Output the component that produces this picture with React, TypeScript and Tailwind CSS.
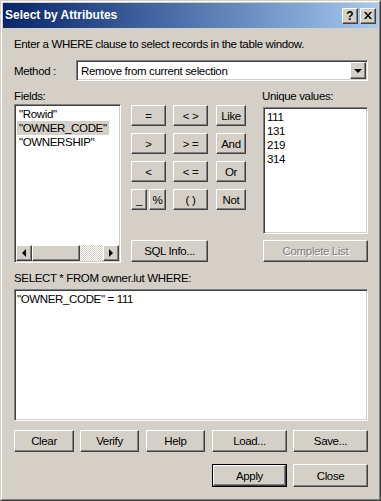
import React from 'react';

const FONT = "font-['Liberation_Sans',Arial,sans-serif] text-[11.5px] tracking-[-0.35px] leading-[14px] text-black";
const RAISED =
    'border border-t-white border-l-white border-b-[#404040] border-r-[#404040] shadow-[inset_-1px_-1px_0_#808080,inset_1px_1px_0_#d4d0c8]';
const SUNKEN =
    'border border-t-[#808080] border-l-[#808080] border-b-white border-r-white shadow-[inset_1px_1px_0_#404040,inset_-1px_-1px_0_#d4d0c8]';

const Btn = ({ children, className = '', disabled = false }: { children: React.ReactNode; className?: string; disabled?: boolean }) => (
    <div
        className={`flex shrink-0 items-center justify-center bg-[#d4d0c8] ${RAISED} ${className} ${disabled ? 'text-[#808080] [text-shadow:1px_1px_0_#fff]' : ''
            }`}
    >
        {children}
    </div>
);

const Arrow = ({ dir }: { dir: 'left' | 'right' | 'down' }) => {
    const pts = dir === 'left' ? '5,0 5,8 1,4' : dir === 'right' ? '1,0 1,8 5,4' : '0,1 8,1 4,5';
    const box = dir === 'down' ? '0 0 8 6' : '0 0 6 8';
    return (
        <svg width={dir === 'down' ? 8 : 6} height={dir === 'down' ? 6 : 8} viewBox={box}>
            <polygon points={pts} fill="#000" />
        </svg>
    );
};

const OPS = [
    ['=', '< >', 'Like'],
    ['>', '> =', 'And'],
    ['<', '< =', 'Or'],
];

export default function App() {
    return (
        <div className={`w-[381px] h-[501px] border border-t-[#d4d0c8] border-l-[#d4d0c8] border-b-[#404040] border-r-[#404040] ${FONT}`}>
            <div className="flex h-full flex-col border border-t-white border-l-white border-b-[#808080] border-r-[#808080] bg-[#d4d0c8] p-[1px]">
                {/* Title bar */}
                <div className="flex h-[25px] shrink-0 items-center bg-linear-to-r from-[#0a246a] to-[#a6caf0] pl-[2px] pr-[2px]">
                    <span className="-mt-[1px] font-['Liberation_Sans',sans-serif] text-[12px] font-bold tracking-normal text-white">Select by Attributes</span>
                    <div className="ml-auto flex gap-[2px]">
                        <Btn className="h-[16px] w-[16px]">
                            <span className="font-['Liberation_Sans',sans-serif] text-[12px] font-bold leading-none tracking-normal">?</span>
                        </Btn>
                        <Btn className="h-[16px] w-[16px]">
                            <svg width="8" height="7" viewBox="0 0 8 7">
                                <path d="M0 0h2l2 2.5L6 0h2L5 3.5 8 7H6L4 4.5 2 7H0l3-3.5z" fill="#000" />
                            </svg>
                        </Btn>
                    </div>
                </div>

                <div className="flex flex-col pl-[11px] pr-[10px]">
                    <p className="mt-[9px]">Enter a WHERE clause to select records in the table window.</p>

                    {/* Method */}
                    <div className="mt-[9px] flex h-[21px] items-center">
                        <span className="w-[62px]">Method :</span>
                        <div className={`flex h-[21px] flex-1 items-center bg-white p-[1px] ${SUNKEN}`}>
                            <span className="pl-[3px]">Remove from current selection</span>
                            <Btn className="ml-auto h-[17px] w-[16px]">
                                <Arrow dir="down" />
                            </Btn>
                        </div>
                    </div>

                    {/* Fields / operators / unique values */}
                    <div className="mt-[8px] flex">
                        <div className="flex w-[107px] flex-col">
                            <span className="h-[14px]">Fields:</span>
                            <div className={`mt-[1px] flex h-[159px] flex-col bg-white p-[1px] ${SUNKEN}`}>
                                <div className="flex flex-1 flex-col items-start pt-[1px] pl-[1px]">
                                    <span className="px-[2px]">"Rowid"</span>
                                    <span className="bg-[#d4d0c8] px-[2px]">"OWNER_CODE"</span>
                                    <span className="px-[2px]">"OWNERSHIP"</span>
                                </div>
                                <div className="flex h-[16px]">
                                    <Btn className="h-[16px] w-[16px]">
                                        <Arrow dir="left" />
                                    </Btn>
                                    <Btn className="h-[16px] w-[48px]">{null}</Btn>
                                    <div className="flex-1 bg-[repeating-conic-gradient(#d4d0c8_0%_25%,#ffffff_0%_50%)] bg-size-[2px_2px]" />
                                    <Btn className="h-[16px] w-[16px]">
                                        <Arrow dir="right" />
                                    </Btn>
                                </div>
                            </div>
                        </div>

                        <div className="ml-[10px] flex flex-col">
                            <div className="mt-[16px] flex flex-col gap-[7px]">
                                {OPS.map((row) => (
                                    <div key={row[0]} className="flex">
                                        <Btn className="h-[21px] w-[35px]">{row[0]}</Btn>
                                        <Btn className="ml-[7px] h-[21px] w-[35px]">{row[1]}</Btn>
                                        <Btn className="ml-[8px] h-[21px] w-[30px]">{row[2]}</Btn>
                                    </div>
                                ))}
                                <div className="flex">
                                    <Btn className="h-[21px] w-[16px]">_</Btn>
                                    <Btn className="ml-[2px] h-[21px] w-[17px]">%</Btn>
                                    <Btn className="ml-[7px] h-[21px] w-[35px]">( )</Btn>
                                    <Btn className="ml-[8px] h-[21px] w-[30px]">Not</Btn>
                                </div>
                            </div>
                            <Btn className="mt-[30px] h-[22px] w-[77px]">SQL Info...</Btn>
                        </div>

                        <div className="ml-auto flex w-[106px] flex-col">
                            <span className="h-[14px]">Unique values:</span>
                            <div className={`ml-[1px] mt-[4px] h-[127px] bg-white p-[1px] ${SUNKEN}`}>
                                <div className="flex flex-col pt-[1px] pl-[2px]">
                                    <span>111</span>
                                    <span>131</span>
                                    <span>219</span>
                                    <span>314</span>
                                </div>
                            </div>
                            <Btn disabled className="ml-[1px] mt-[6px] h-[22px] w-[105px]">
                                Complete List
                            </Btn>
                        </div>
                    </div>

                    {/* Expression */}
                    <p className="mt-[8px]">SELECT * FROM owner.lut WHERE:</p>
                    <div className={`mt-[4px] h-[132px] bg-white p-[1px] ${SUNKEN}`}>
                        <p className="pt-[1px] pl-[1px]">"OWNER_CODE" = 111</p>
                    </div>

                    {/* Buttons */}
                    <div className="mt-[9px] flex">
                        <Btn className="h-[22px] w-[60px]">Clear</Btn>
                        <Btn className="ml-[6px] h-[22px] w-[59px]">Verify</Btn>
                        <Btn className="ml-[7px] h-[22px] w-[59px]">Help</Btn>
                        <Btn className="ml-[7px] h-[22px] w-[75px]">Load...</Btn>
                        <Btn className="ml-[6px] h-[22px] w-[75px]">Save...</Btn>
                    </div>
                    <div className="mt-[12px] flex justify-end">
                        <div className="border border-black">
                            <Btn className="h-[21px] w-[73px]">Apply</Btn>
                        </div>
                        <Btn className="ml-[6px] h-[23px] w-[75px]">Close</Btn>
                    </div>
                </div>
            </div>
        </div>
    );
}
